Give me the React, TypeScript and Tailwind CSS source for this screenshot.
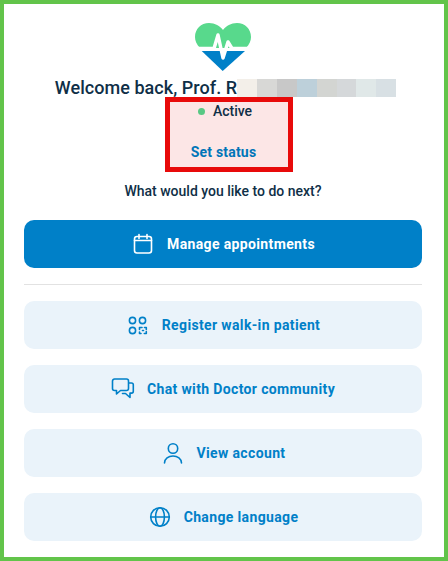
import React from 'react';

const blurColors = [
    'bg-[#f3efe9]',
    'bg-[#d8d8d6]',
    'bg-[#c8c8c8]',
    'bg-[#bdd0da]',
    'bg-[#d3d5d2]',
    'bg-[#d5d8da]',
    'bg-[#e0e8e8]',
    'bg-[#d8e0e4]',
];

const Logo: React.FC = () => (
    <svg width="56" height="48" viewBox="0 0 56 48">
        <path d="M5 25 C1.500 21 0 18 0 14 C0 6 6 0 14 0 C20 0 25 3 28 7 C31 3 36 0 42 0 C50 0 56 6 56 14 C56 18 54.500 21 51 25 Z" fill="#58d98c" />
        <path d="M6.700 28 L50 28 L27.700 48 Z" fill="#0080c8" />
        <path d="M2 25.500 L19 25.500 L23 12 L28 35 L33 19 L37 25.500 L54 25.500" fill="none" stroke="#ffffff" strokeWidth="3.500" strokeLinejoin="round" />
    </svg>
);

const Icon: React.FC<{ children: React.ReactNode }> = ({ children }) => (
    <svg width="24" height="24" viewBox="0 0 24 24" fill="none" stroke="currentColor" strokeWidth="1.600" strokeLinecap="round" strokeLinejoin="round">
        {children}
    </svg>
);

const CalendarIcon = () => (
    <Icon>
        <rect x="3.500" y="4.500" width="17" height="16.500" rx="2.500" />
        <path d="M8 2.500v4M16 2.500v4M3.500 8.500h17" />
    </Icon>
);

const QrIcon = () => (
    <Icon>
        <circle cx="6.500" cy="7.500" r="3.100" />
        <circle cx="16.500" cy="7.500" r="3.100" />
        <circle cx="6.500" cy="17.500" r="3.100" />
        <path d="M13.500 16.500v-2h2.500M18.500 14.500h1.800v2M16.500 17.500h1M13.500 19v1.500h1.500M20.300 18.500v2h-2" />
    </Icon>
);

const ChatIcon = () => (
    <Icon>
        <path d="M3.500 2h12a2 2 0 0 1 2 2v7.500a2 2 0 0 1-2 2H9.500L5.500 17v-3.500h-2a2 2 0 0 1-2-2V4a2 2 0 0 1 2-2Z" />
        <path d="M18 6h2.500a1.800 1.800 0 0 1 1.800 1.800v6.500a1.800 1.800 0 0 1-1.800 1.800h-1.500v4.400L14.500 16.500h-3" />
    </Icon>
);

const UserIcon = () => (
    <Icon>
        <circle cx="12" cy="7.500" r="4.700" />
        <path d="M3.500 22c0-4.500 4-7 8.500-7s8.500 2.500 8.500 7" />
    </Icon>
);

const GlobeIcon = () => (
    <Icon>
        <circle cx="12" cy="12" r="9.300" />
        <ellipse cx="12" cy="12" rx="4.400" ry="9.300" />
        <path d="M3 12h18" />
    </Icon>
);

interface ActionRowProps {
    icon: React.ReactNode;
    label: string;
}

const ActionRow: React.FC<ActionRowProps> = ({ icon, label }) => (
    <button className="flex h-12 w-full items-center justify-center gap-3 rounded-[10px] bg-[#eaf3fa] text-sm font-bold tracking-[0.36px] text-[#0080c8]">
        {icon}
        <span>{label}</span>
    </button>
);

export default function App() {
    return (
        <div className="h-[561px] w-[448px] border-4 border-[#62c44a] bg-white pl-5 pr-[22px] pt-[19px] font-['Roboto',sans-serif]">
            <div className="flex flex-col items-center">
                <Logo />
                <div className="mt-[7px] ml-[5px] flex h-[19px] items-center text-lg font-medium tracking-[0.05px] text-[#0f2f47]">
                    <span className="whitespace-nowrap">Welcome back, Prof. R</span>
                    <div className="flex h-[18px] w-[159px]">
                        {blurColors.map((color) => (
                            <div key={color} className={`h-full flex-1 ${color}`} />
                        ))}
                    </div>
                </div>
                <div className="ml-3 flex h-[75px] w-32 flex-col items-center border-[5px] border-[#e80a0a] bg-[#fce6e6] pr-[11px] text-sm">
                    <div className="flex items-center gap-2 pl-[3px] text-[#0f2f47]">
                        <span className="h-[7px] w-[7px] rounded-full bg-[#58c884]" />
                        <span className="font-medium leading-[18px]">Active</span>
                    </div>
                    <span className="mt-[23px] font-bold leading-[18px] tracking-[0.2px] text-[#0075b8]">Set status</span>
                </div>
                <p className="mt-[9px] text-sm font-medium leading-[20px] text-[#0f2f47]">What would you like to do next?</p>
            </div>
            <button className="mt-[19px] flex h-12 w-full items-center justify-center gap-3 rounded-[10px] bg-[#0080c8] text-sm font-bold tracking-[0.36px] text-white">
                <CalendarIcon />
                <span>Manage appointments</span>
            </button>
            <div className="mt-4 h-px bg-[#e2e2e2]" />
            <div className="mt-4 flex flex-col gap-4">
                <ActionRow icon={<QrIcon />} label="Register walk-in patient" />
                <ActionRow icon={<ChatIcon />} label="Chat with Doctor community" />
                <ActionRow icon={<UserIcon />} label="View account" />
                <ActionRow icon={<GlobeIcon />} label="Change language" />
            </div>
        </div>
    );
}
